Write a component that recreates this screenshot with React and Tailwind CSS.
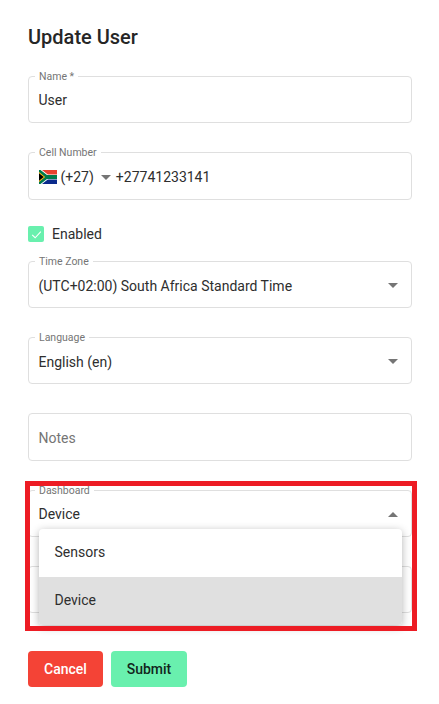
const font = { fontFamily: "Roboto, sans-serif" };

function ChevronDown({ up }) {
  return (
    <svg width="10" height="5" viewBox="0 0 10 5" className={up ? "rotate-180" : ""}>
      <path d="M0 0h10L5 5z" fill="#757575" />
    </svg>
  );
}

function SaFlag() {
  return (
    <svg width="18" height="14" viewBox="0 0 18 14" className="shrink-0">
      <rect width="18" height="7" fill="#e8412f" />
      <rect y="7" width="18" height="7" fill="#0a2a8c" />
      <path d="M0 0h3L8.8 4.4H18v5.2H8.8L3 14H0z" fill="#fff" />
      <path d="M0 0h1.5L8 5H18v4H8l-6.5 5H0z" fill="#007a4d" />
      <path d="M0 2L6.2 7 0 12z" fill="#ffb915" />
      <path d="M0 3.2L4.7 7 0 10.8z" fill="#000" />
    </svg>
  );
}

function Field({ label, children, className = "" }) {
  return (
    <div className={`relative flex h-[47px] items-center rounded-[4px] border border-[#dfdfdf] pl-[9.5px] pr-[10px] pt-[2px] text-[14px] text-[#2e2e2e] ${className}`}>
      {label ? (
        <span className="absolute left-[6px] top-[-6px] bg-white px-[4px] text-[10.5px] leading-[12px] text-[#757575]">{label}</span>
      ) : null}
      {children}
    </div>
  );
}

function SelectField({ label, value, open, textClass = "" }) {
  return (
    <Field label={label} className="justify-between pr-[13px]">
      <span className={textClass}>{value}</span>
      <ChevronDown up={open} />
    </Field>
  );
}

export default function App() {
  return (
    <div className="relative h-[704px] w-[439px] overflow-hidden bg-white pl-[28px] pr-[27px] pt-[25px]" style={font}>
      <h1 className="text-[20px] font-medium leading-[24px] text-[#262626]">Update User</h1>

      <div className="mt-[27px]">
        <Field label="Name *">User</Field>
      </div>

      <div className="mt-[29px]">
        <Field label="Cell Number" className="h-[48px]">
          <SaFlag />
          <span className="ml-[4px]">(+27)</span>
          <span className="ml-[7px] mr-[5px] flex"><ChevronDown /></span>
          <span>+27741233141</span>
        </Field>
      </div>

      <label className="mt-[26px] flex h-[16px] items-center gap-[8px] text-[14px] text-[#2e2e2e]">
        <span className="flex h-[16px] w-[16px] items-center justify-center rounded-[2px] bg-[#69f0ae]">
          <svg width="13" height="13" viewBox="0 0 24 24" fill="none">
            <path d="M4 12.5l5.5 5.5L20 6.5" stroke="#fff" strokeWidth="2" />
          </svg>
        </span>
        Enabled
      </label>

      <div className="mt-[19px]">
        <SelectField label="Time Zone" value="(UTC+02:00) South Africa Standard Time" textClass="mt-[2px]" />
      </div>
      <div className="mt-[29px]">
        <SelectField label="Language" value="English (en)" textClass="mt-[2px]" />
      </div>
      <div className="mt-[29px]">
        <Field className="h-[48px] text-[#757575]">Notes</Field>
      </div>
      <div className="mt-[29px]">
        <SelectField label="Dashboard" value="Device" open />
      </div>
      <div className="mt-[29px]">
        <Field />
      </div>

      <div className="mt-[38px] flex gap-[8px]">
        <button className="h-[36px] w-[75px] rounded-[4px] bg-[#f44336] text-[14px] font-medium text-white">Cancel</button>
        <button className="h-[36px] w-[76px] rounded-[4px] bg-[#69f0ae] text-[14px] font-medium text-[#12261c]">Submit</button>
      </div>

      {/* open menu */}
      <ul className="absolute left-[39px] top-[529px] w-[363px] overflow-hidden rounded-[4px] bg-white text-[14px] text-[#2e2e2e] shadow-[0_2px_8px_rgba(0,0,0,0.3)]">
        <li className="flex h-[48px] items-center px-[15.5px] pb-[2px]">Sensors</li>
        <li className="flex h-[48px] items-center bg-[#e0e0e0] px-[15.5px] pb-[2px]">Device</li>
      </ul>

      {/* annotation box */}
      <div className="pointer-events-none absolute left-[25px] top-[481px] h-[150px] w-[392px] border-[5px] border-[#ed1c24]" />
    </div>
  );
}
